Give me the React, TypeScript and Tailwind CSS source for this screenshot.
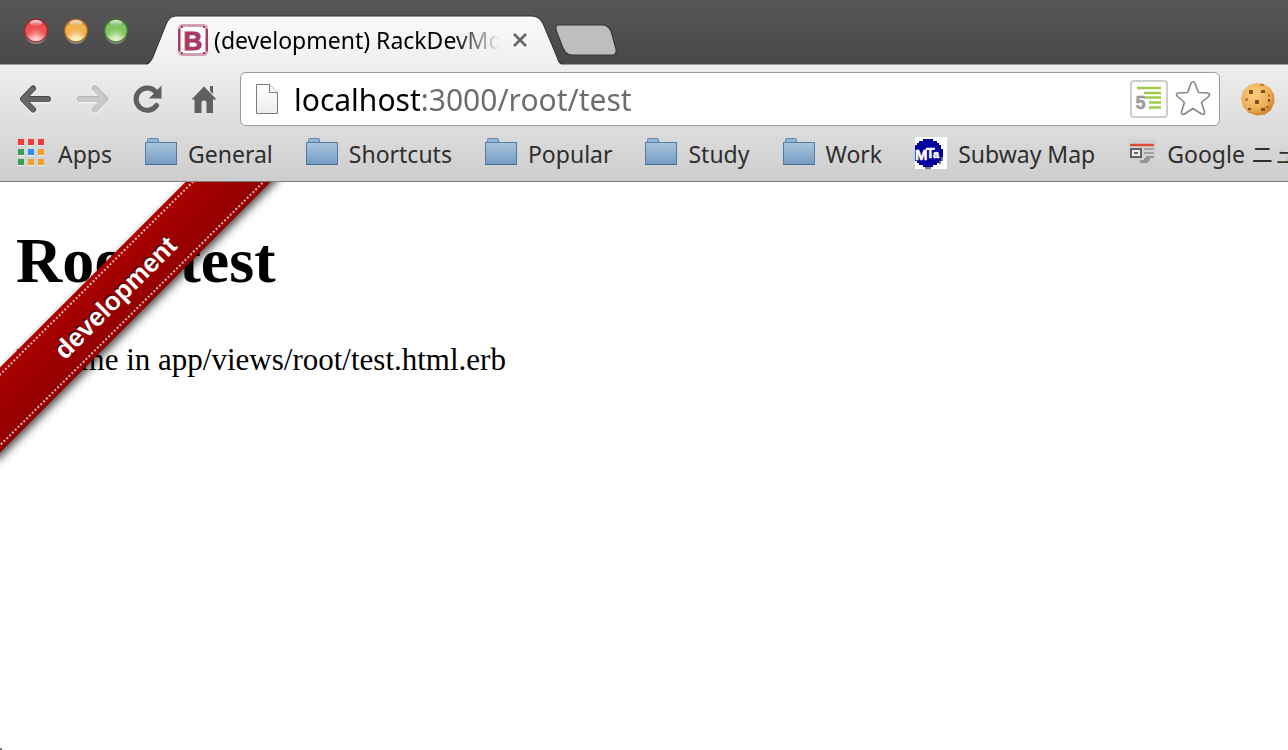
import { useState } from "react";
import type { ReactNode } from "react";

function TrafficLight({ id, rim, mid, low, label }: { id: string; rim: string; mid: string; low: string; label: string }) {
  return (
    <button type="button" aria-label={label} className="size-7">
      <svg viewBox="0 0 28 28" className="size-7">
        <defs>
          <linearGradient id={id + "-body"} x1="0" y1="0" x2="0" y2="1">
            <stop offset="0" stopColor={rim} />
            <stop offset="0.3" stopColor={mid} />
            <stop offset="0.65" stopColor={mid} />
            <stop offset="1" stopColor={low} />
          </linearGradient>
          <radialGradient id={id + "-glow"} cx="0.5" cy="0.85" r="0.45">
            <stop offset="0" stopColor="#fff" stopOpacity="0.6" />
            <stop offset="1" stopColor="#fff" stopOpacity="0" />
          </radialGradient>
          <linearGradient id={id + "-gloss"} x1="0" y1="0" x2="0" y2="1">
            <stop offset="0" stopColor="#fff" stopOpacity="0.9" />
            <stop offset="1" stopColor="#fff" stopOpacity="0.05" />
          </linearGradient>
        </defs>
        <circle cx="14" cy="16" r="11" fill="#9a9a9a" opacity="0.8" />
        <circle cx="14" cy="13.5" r="11.3" fill={"url(#" + id + "-body)"} stroke={rim} strokeWidth="1.2" />
        <circle cx="14" cy="13.5" r="10.8" fill={"url(#" + id + "-glow)"} />
        <ellipse cx="14" cy="6" rx="6.5" ry="3" fill={"url(#" + id + "-gloss)"} />
      </svg>
    </button>
  );
}

function TabShape() {
  return (
    <svg viewBox="0 0 416 50" preserveAspectRatio="none" className="absolute inset-0 h-full w-full" aria-hidden="true">
      <defs>
        <linearGradient id="tab-fill" x1="0" y1="0" x2="0" y2="1">
          <stop offset="0" stopColor="#fafafa" />
          <stop offset="1" stopColor="#efefef" />
        </linearGradient>
      </defs>
      <path
        d="M0 50C4 49 5 46 7 42L19 12C22 4 25 1 31 1H385C391 1 395 4 398 11L411 42C412 46 413 49 416 50Z"
        fill="url(#tab-fill)"
      />
      <path
        d="M0 49C4 48 5 46 7 42L19 12C22 4 25 1 31 1H385C391 1 395 4 398 11L411 42C412 46 413 48 416 49"
        fill="none"
        stroke="#303030"
        strokeWidth="1"
      />
    </svg>
  );
}

function BootstrapIcon() {
  return (
    <svg viewBox="0 0 32 32" className="size-8 shrink-0" aria-hidden="true">
      <rect x="2.500" y="1.500" width="27" height="29" rx="3" fill="#fff" stroke="#d09fb1" strokeWidth="3" />
      <path d="M2 5V27M30 5V27" stroke="#a83a66" strokeWidth="2" />
      <path d="M4 3H6M26 3H28M4 29H6M26 29H28" stroke="#a83a66" strokeWidth="2" />
      <text x="16" y="25.500" textAnchor="middle" fontFamily="Liberation Sans, sans-serif" fontWeight="bold" fontSize="26" fill="#a83a66" stroke="#a83a66">
        B
      </text>
    </svg>
  );
}

function BackIcon({ faded = false }: { faded?: boolean }) {
  const tone = faded ? "#c9c9c9" : "#666666";
  const edge = faded ? "#b4b4b4" : "#474747";
  return (
    <svg viewBox="0 0 32 30" className={faded ? "h-[30px] w-8 -scale-x-100" : "h-[30px] w-8"} aria-hidden="true">
      <g fill="none" strokeLinecap="round" strokeLinejoin="round">
        <path d="M13 5.500L3.500 15.500L13 26M4.500 15.500H28" stroke="#f4f4f4" strokeWidth="6" transform="translate(0 1)" />
        <path d="M13 4.500L3 15L13 25.500M4.500 15H28" stroke={edge} strokeWidth="6" />
        <path d="M13 5L3.300 15.300L13 25.500M4.500 15.400H28" stroke={tone} strokeWidth="4.800" />
      </g>
    </svg>
  );
}

function ReloadIcon() {
  return (
    <svg viewBox="0 0 32 30" className="h-[30px] w-8" aria-hidden="true">
      <path d="M24.500 21.500A11.200 11.200 0 1 1 23.500 7.500" fill="none" stroke="#5f5f5f" strokeWidth="5" strokeLinecap="round" />
      <path d="M29.500 1.500V14.500H17Z" fill="#5f5f5f" />
    </svg>
  );
}

function HomeIcon() {
  return (
    <svg viewBox="0 0 32 30" className="h-[30px] w-8" aria-hidden="true">
      <path d="M16 2.500L28.500 15.500H25V29H18.500V19A2.500 2.500 0 0 0 13.500 19V29H6.500V15.500H3.500Z" fill="#5f5f5f" />
      <path d="M22 2H25V10L22 7Z" fill="#5f5f5f" />
    </svg>
  );
}

function PageIcon() {
  return (
    <svg viewBox="0 0 24 32" className="h-8 w-6 shrink-0" aria-hidden="true">
      <defs>
        <linearGradient id="page-fill" x1="0" y1="0" x2="0" y2="1">
          <stop offset="0" stopColor="#fff" />
          <stop offset="1" stopColor="#ececec" />
        </linearGradient>
      </defs>
      <path d="M1.500 1.500H14.500L22.500 9.500V30.500H1.500Z" fill="url(#page-fill)" stroke="#7c7c7c" />
      <path d="M14.500 1.500V9.500H22.500" fill="#fff" stroke="#7c7c7c" />
    </svg>
  );
}

function OutlineIcon() {
  return (
    <svg viewBox="0 0 40 40" className="size-10" aria-hidden="true">
      <rect x="2" y="2" width="36" height="36" rx="3" fill="#fff" stroke="#cdcdcd" strokeWidth="2" />
      <path d="M8 9H32M15 14H32M15 18.500H32M20 23.500H32M20 28.500H32" stroke="#9fcb4c" strokeWidth="2.600" />
      <text x="11.500" y="30" textAnchor="middle" fontFamily="Liberation Sans, sans-serif" fontWeight="bold" fontSize="18" fill="#999" stroke="#999" strokeWidth="0.500">
        5
      </text>
    </svg>
  );
}

function StarIcon() {
  return (
    <svg viewBox="0 0 40 40" className="size-10" aria-hidden="true">
      <path
        d="M18 4.500Q20 1 22 4.500L25.500 13.500L34.500 14Q38 14.500 35.500 17.500L28.500 23.500L31.500 32.500Q32 36.500 28.500 35L20 29.500L11.500 35Q8 36.500 8.500 32.500L11.500 23.500L4.500 17.500Q2 14.500 5.500 14L14.500 13.500Z"
        fill="#fff"
        stroke="#858585"
        strokeWidth="1.600"
        strokeLinejoin="round"
      />
    </svg>
  );
}

function CookieIcon() {
  return (
    <svg viewBox="0 0 36 36" className="size-9" aria-hidden="true">
      <defs>
        <radialGradient id="cookie-fill" cx="0.4" cy="0.35" r="0.7">
          <stop offset="0" stopColor="#fcd083" />
          <stop offset="0.65" stopColor="#eeae55" />
          <stop offset="1" stopColor="#cc7a25" />
        </radialGradient>
      </defs>
      <path d="M17 2L24 3L30 7L34 13L34.500 21L31 29L25 33.500L17 34.500L9 32L3 26L1 18L3 10L9 4Z" fill="url(#cookie-fill)" />
      <g fill="#80501f">
        <path d="M9 9h4v4h-4zM21 9h4v3h-4zM15 19h4v4h-4zM28 18h2v3h-2zM21 27h4v3h-4zM8 27h3v2h-3z" />
        <path d="M20 3h4v2h-4zM5 17h3v3h-3zM28 13h2v3h-2zM26 25h3v2h-3z" opacity="0.5" />
      </g>
    </svg>
  );
}

function AppsIcon() {
  const dots = ["#f43b3b", "#f43b3b", "#f43b3b", "#3a9d58", "#2f8ef5", "#f0a028", "#3a9d58", "#f0a028", "#f0a028"];
  return (
    <svg viewBox="0 0 26 28" className="mr-[3px] h-7 w-[26px] shrink-0" aria-hidden="true">
      {dots.map((fill, i) => (
        <g key={i}>
          <rect x={(i % 3) * 10} y={Math.floor(i / 3) * 10} width="6" height="7" fill="#efefef" />
          <rect x={(i % 3) * 10} y={Math.floor(i / 3) * 10} width="6" height="6" fill={fill} />
        </g>
      ))}
    </svg>
  );
}

function FolderIcon() {
  return (
    <svg viewBox="0 0 32 32" className="size-8 shrink-0" aria-hidden="true">
      <defs>
        <linearGradient id="folder-fill" x1="0" y1="0" x2="0" y2="1">
          <stop offset="0" stopColor="#aac6df" />
          <stop offset="1" stopColor="#739bc2" />
        </linearGradient>
      </defs>
      <path d="M2.500 6V2.500Q2.500 1.500 3.500 1.500H12.500Q13.500 1.500 13.500 2.500V6" fill="#94b4d6" stroke="#6488ad" />
      <rect x="0.500" y="5.500" width="31" height="22" fill="url(#folder-fill)" stroke="#537ca3" />
      <path d="M1 27.500H31" stroke="#456b90" />
    </svg>
  );
}

function SubwayIcon() {
  return (
    <svg viewBox="0 0 32 32" className="size-8 shrink-0" aria-hidden="true">
      <rect width="32" height="32" fill="#fff" />
      <path
        d="M8 2H18V4H22V6H24V8H26V12H28V20H26V24H24V26H22V28H18V30H8V28H4V26H2V24H0V8H2V6H4V4H8Z"
        fill="#00009c"
        shapeRendering="crispEdges"
      />
      <path d="M10 31H16M27 20V24M25 24V27" stroke="#777" strokeWidth="2" />
      <g fontFamily="Liberation Sans Narrow, Liberation Sans, sans-serif" fontWeight="bold" fill="#fff" stroke="#fff" strokeWidth="0.500">
        <text x="0" y="23" fontSize="15">M</text>
        <text x="11" y="21" fontSize="14">T</text>
        <text x="18" y="21" fontSize="11">a</text>
      </g>
    </svg>
  );
}

function NewsIcon() {
  return (
    <svg viewBox="0 0 28 28" className="size-7 shrink-0" aria-hidden="true">
      <rect width="28" height="28" fill="#d2d2d2" />
      <path d="M2 6H26" stroke="#dd4b39" strokeWidth="2.500" />
      <rect x="3" y="10" width="10" height="8" fill="#eee" stroke="#636363" strokeWidth="2" />
      <path d="M6 14H10" stroke="#636363" strokeWidth="2" />
      <path d="M16 10H26M16 14H26" stroke="#a2a2a2" strokeWidth="2" />
      <path d="M18 17H26V19H22V22H20V24H12V21H16V19H18Z" fill="#949494" />
    </svg>
  );
}

function Bookmark({ icon, children }: { icon: ReactNode; children: ReactNode }) {
  return (
    <a href="#" className="flex shrink-0 items-center gap-[11px] whitespace-nowrap">
      {icon}
      <span className="pt-1">{children}</span>
    </a>
  );
}

const folders = ["General", "Shortcuts", "Popular", "Study", "Work"];

export default function App() {
  const [address, setAddress] = useState("localhost:3000/root/test");
  return (
    <div className="flex min-h-screen flex-col overflow-hidden bg-white font-['Noto_Sans','Noto_Sans_CJK_JP',sans-serif]">
      <header>
        <div className="flex h-[65px] items-end border-b border-[#9b9b9b] bg-linear-to-b from-[#575757] to-[#484848]">
          <div className="flex gap-3 self-start pt-[17px] pl-[22px]">
            <TrafficLight id="close" label="Close" rim="#a3262a" mid="#f14f50" low="#fbb4b0" />
            <TrafficLight id="minimize" label="Minimize" rim="#a8651c" mid="#f3b04d" low="#fdf0a8" />
            <TrafficLight id="zoom" label="Zoom" rim="#417a2b" mid="#83c562" low="#d5f2b4" />
          </div>
          <div className="relative ml-4 -mb-px h-[50px] w-[416px]">
            <TabShape />
            <div className="relative flex h-full items-center pr-[30px] pl-[31px]">
              <BootstrapIcon />
              <span className="ml-[5px] flex-1 overflow-hidden mask-r-from-84% mask-r-to-100% text-[23px] whitespace-nowrap text-black">
                (development) RackDevMode
              </span>
              <button type="button" aria-label="Close tab" className="ml-2 p-1">
                <svg viewBox="0 0 16 16" className="size-4" aria-hidden="true">
                  <path d="M2 2L14 14M14 2L2 14" stroke="#666" strokeWidth="2.600" />
                </svg>
              </button>
            </div>
          </div>
          <button type="button" aria-label="New tab" className="mb-[7px] -ml-2">
            <svg viewBox="0 0 64 34" className="h-[34px] w-16" aria-hidden="true">
              <path
                d="M5 2H48Q54 2 57 8L62 26Q63 32 58 32H18Q12 32 9 25L2 7Q1 2 5 2Z"
                fill="#bebebe"
                stroke="#373737"
                strokeWidth="1.200"
              />
            </svg>
          </button>
        </div>

        <div className="border-b border-[#7d7d7d] bg-linear-to-b from-[#efefef] to-[#cdcdcd]">
          <div className="flex items-center pt-[7px] pl-5">
            <div className="flex shrink-0 gap-6">
              <button type="button" aria-label="Back"><BackIcon /></button>
              <button type="button" aria-label="Forward" disabled><BackIcon faded /></button>
              <button type="button" aria-label="Reload"><ReloadIcon /></button>
              <button type="button" aria-label="Home"><HomeIcon /></button>
            </div>
            <form className="ml-5 flex h-[54px] flex-1 items-center rounded-md border border-[#9a9a9a] bg-white pr-[6px] pl-[14px]" onSubmit={(e) => e.preventDefault()}>
              <PageIcon />
              <input
                type="text"
                aria-label="Address"
                value={address}
                onChange={(e) => setAddress(e.target.value)}
                className="ml-[15px] min-w-0 flex-1 bg-linear-to-r from-black from-[126px] to-[#6c6c6c] to-[126px] bg-clip-text text-[30px] text-transparent caret-black outline-none"
              />
              <button type="button" aria-label="Page outline"><OutlineIcon /></button>
              <button type="button" aria-label="Bookmark this page" className="ml-1"><StarIcon /></button>
            </form>
            <button type="button" aria-label="Cookies" className="mr-3 ml-5"><CookieIcon /></button>
          </div>

          <nav aria-label="Bookmarks" className="flex h-[55px] items-center gap-[33px] overflow-hidden pb-0.5 pl-[18px] text-[23px] text-[#2e2e2e]">
            <Bookmark icon={<AppsIcon />}>Apps</Bookmark>
            {folders.map((name) => (
              <Bookmark key={name} icon={<FolderIcon />}>{name}</Bookmark>
            ))}
            <Bookmark icon={<SubwayIcon />}>Subway Map</Bookmark>
            <Bookmark icon={<NewsIcon />}>Google ニュース</Bookmark>
          </nav>
        </div>
      </header>

      <main className="relative flex-1 overflow-hidden px-4 pt-[43px] font-['Liberation_Serif',serif] text-black">
        <h1 className="text-[64px] leading-[72px] font-bold">Root#test</h1>
        <p className="mt-[45px] text-[31px] leading-9">Find me in app/views/root/test.html.erb</p>
        <div className="absolute top-[84px] -left-[86px] w-[400px] -rotate-45 bg-[#aa0000] bg-linear-to-b from-transparent to-black/15 py-1 shadow-[0_4px_8px_rgba(0,0,0,0.7)]">
          <div className="border-y-2 border-dotted border-white/70 pt-2.5 pb-1.5 text-center font-['Liberation_Sans',sans-serif] text-[26px] leading-8 font-bold text-white text-shadow-[0_-2px_0_rgba(0,0,0,0.5)]">
            development
          </div>
        </div>
        <span aria-hidden="true" className="absolute bottom-0 left-0 size-0.5 bg-[#777]" />
      </main>
    </div>
  );
}
